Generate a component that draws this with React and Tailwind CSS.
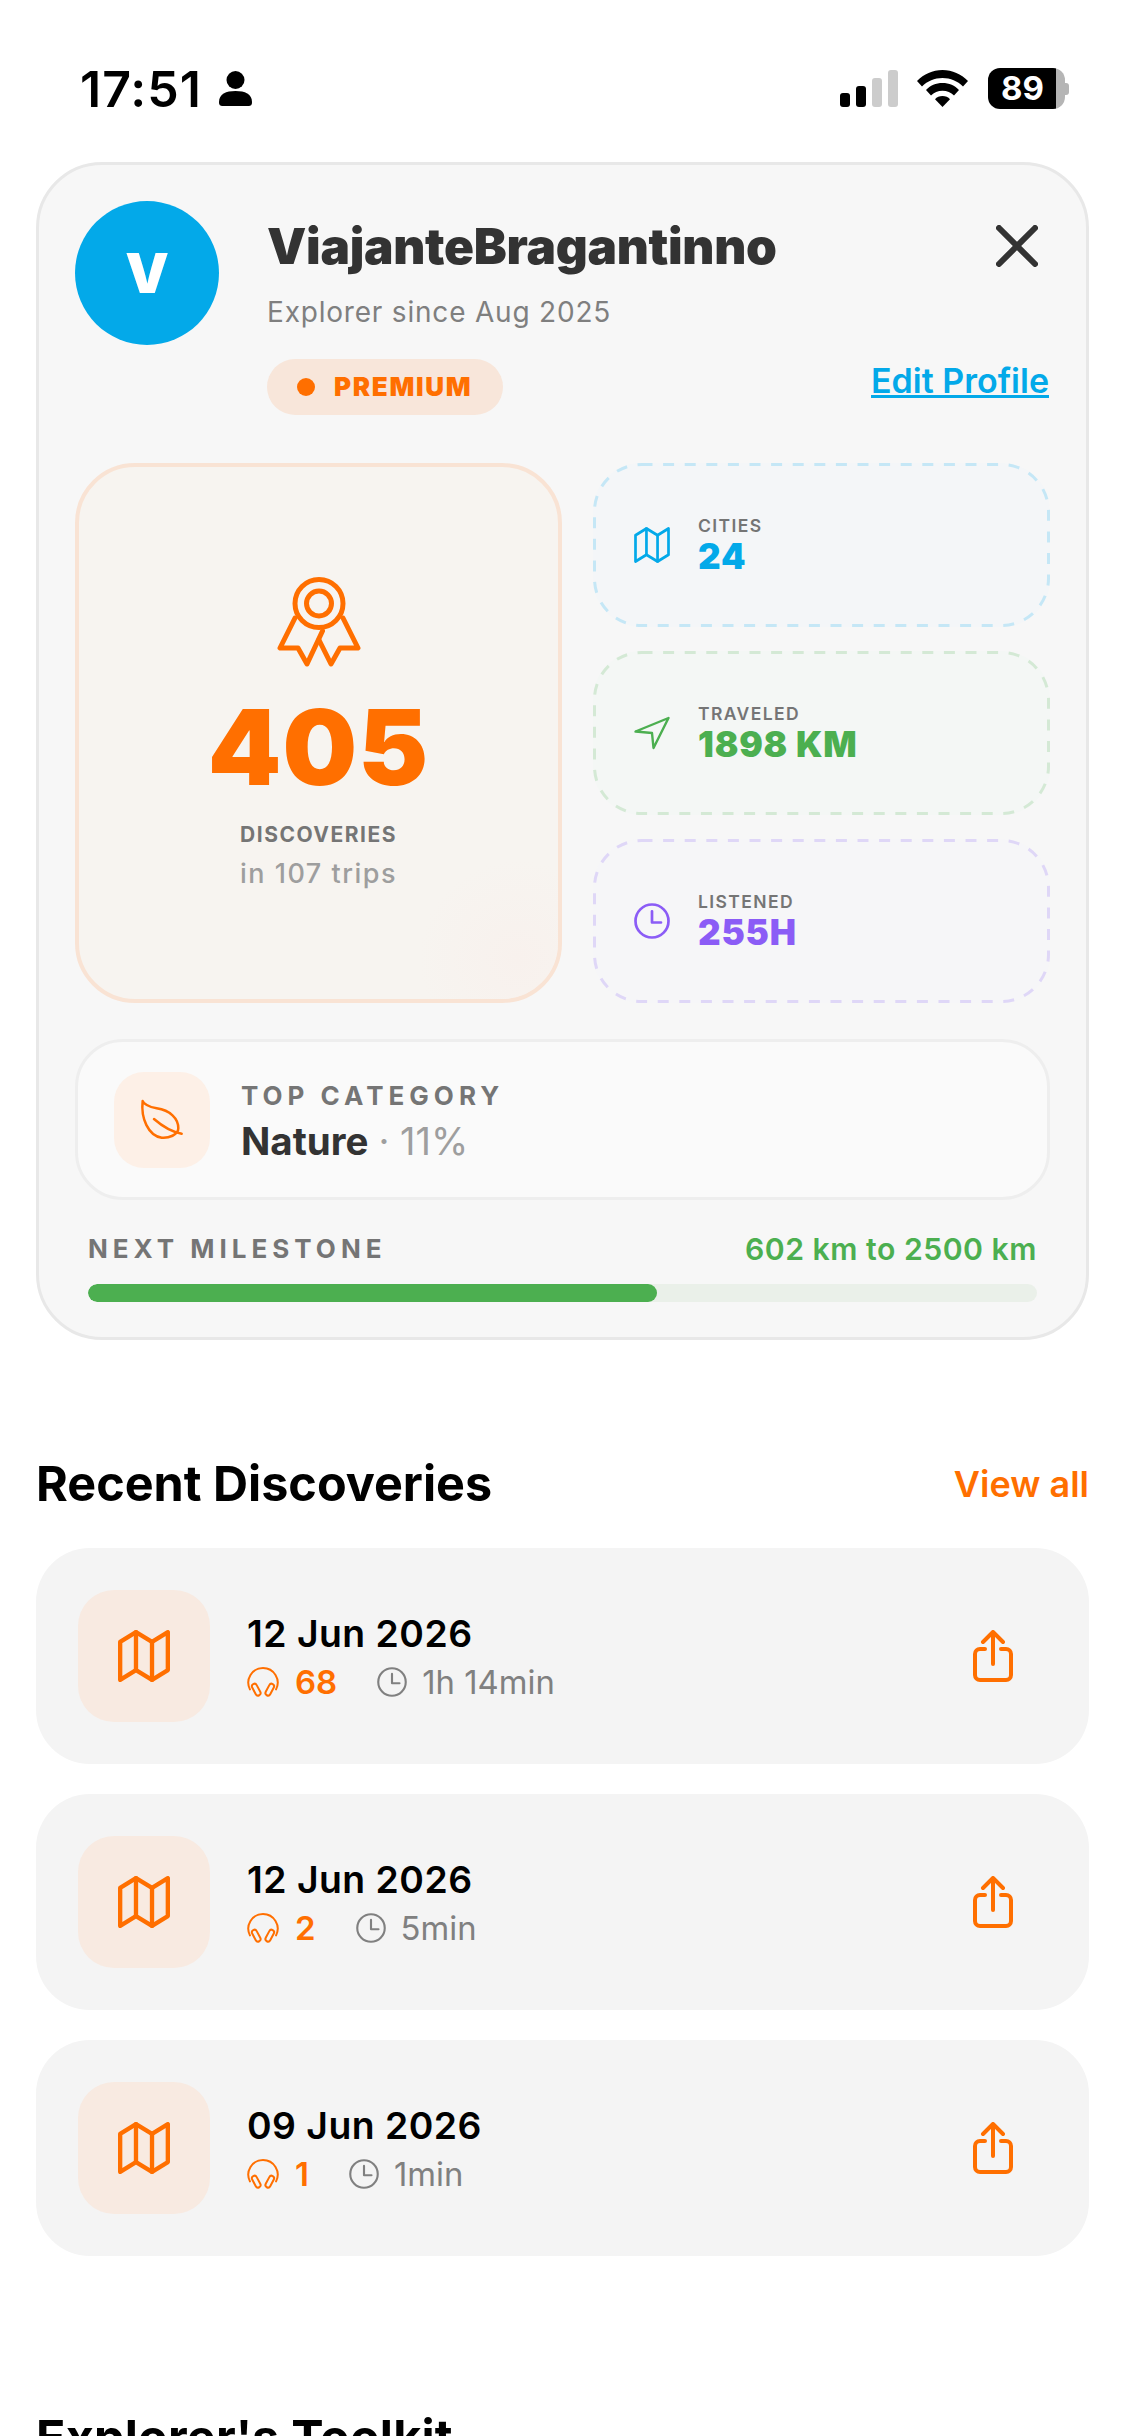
import React from "react";

function MapIcon({ className, strokeWidth = 2 }) {
  return (
    <svg viewBox="0 0 24 24" fill="none" stroke="currentColor" strokeWidth={strokeWidth} strokeLinecap="round" strokeLinejoin="round" className={className}>
      <path d="M1 5.500 8.300 1l7.400 4.500L23 1v17.500L15.700 23l-7.400-4.500L1 23z" />
      <path d="M8.300 1v17.500M15.700 5.500V23" />
    </svg>
  );
}

function NavIcon({ className }) {
  return (
    <svg viewBox="0 0 24 24" fill="none" stroke="currentColor" strokeWidth="1.600" strokeLinecap="round" strokeLinejoin="round" className={className}>
      <path d="M1 11 23 2 13 22l-1-10z" />
    </svg>
  );
}

function ClockIcon({ className, strokeWidth = 1.800 }) {
  return (
    <svg viewBox="0 0 24 24" fill="none" stroke="currentColor" strokeWidth={strokeWidth} strokeLinecap="round" strokeLinejoin="round" className={className}>
      <circle cx="12" cy="12" r="11" />
      <path d="M12 5.500V13h6" />
    </svg>
  );
}

function MedalIcon({ className }) {
  return (
    <svg viewBox="0 0 84 90" fill="none" stroke="currentColor" strokeWidth="5" strokeLinecap="round" strokeLinejoin="round" className={className}>
      <circle cx="42" cy="26.500" r="24" />
      <circle cx="42" cy="26.500" r="12.500" />
      <path d="M18 41 3 71h18l9 16 15.500-33" />
      <path d="M66 41l15 30H63l-9 16-12-24" />
    </svg>
  );
}

function HeadphonesIcon({ className }) {
  return (
    <svg viewBox="0 0 24 24" fill="none" stroke="currentColor" strokeWidth="1.500" strokeLinecap="round" strokeLinejoin="round" className={`overflow-visible ${className}`}>
      <path d="M2.200 17.500A11 11 0 1 1 21.800 17.500" />
      <rect x="5" y="13" width="3.800" height="9.500" rx="1.900" transform="rotate(-28 6.900 17.700)" />
      <rect x="15.200" y="13" width="3.800" height="9.500" rx="1.900" transform="rotate(28 17.100 17.700)" />
    </svg>
  );
}

function LeafIcon({ className }) {
  return (
    <svg viewBox="0 0 240 210" fill="none" stroke="currentColor" strokeWidth="7.500" strokeLinecap="round" strokeLinejoin="round" className={className}>
      <path d="M68 48C70 55 85 66 110 70 150 76 175 100 175 130 175 150 145 160 125 158 85 152 62 100 68 48z" />
      <path d="M102 102C125 122 150 140 185 146" />
    </svg>
  );
}

function ShareIcon({ className }) {
  return (
    <svg viewBox="0 0 40 52" fill="none" stroke="currentColor" strokeWidth="4" strokeLinecap="round" strokeLinejoin="round" className={className}>
      <path d="M20 34V2M10 12 20 2l10 10" />
      <path d="M12 19H7a5 5 0 0 0-5 5v21a5 5 0 0 0 5 5h26a5 5 0 0 0 5-5V24a5 5 0 0 0-5-5h-5" />
    </svg>
  );
}

function StatusBar() {
  return (
    <div className="flex items-center justify-between h-[162px] pl-[80px] pr-[56px] pt-[15px] shrink-0">
      <div className="flex items-center gap-[17px]">
        <span className="text-[50px] leading-none font-semibold text-black tracking-[1px]">17:51</span>
        <svg viewBox="0 0 33 35" fill="black" className="w-[33px] h-[35px]">
          <circle cx="16.500" cy="9" r="9" />
          <path d="M0 31c0-8 7-11 16.500-11S33 23 33 31c0 3-1 4-4 4H4c-3 0-4-1-4-4z" />
        </svg>
      </div>
      <div className="flex items-center">
        <div className="flex items-end gap-[6px] h-[37px]">
          <div className="w-[10px] h-[14px] rounded-[3px] bg-black" />
          <div className="w-[10px] h-[21px] rounded-[3px] bg-black" />
          <div className="w-[10px] h-[29px] rounded-[3px] bg-[#cccccc]" />
          <div className="w-[10px] h-[37px] rounded-[3px] bg-[#cccccc]" />
        </div>
        <svg viewBox="0 0 51 37" className="w-[51px] h-[37px] ml-[19px]" fill="black">
          <path d="M25.500 0C15.500 0 7 4 0 11l5 5.500C10.500 11 17.500 8 25.500 8s15 3 20.500 8.500L51 11C44 4 35.500 0 25.500 0z" />
          <path d="M25.500 13c-6.500 0-12.500 2.500-16.500 7l5 5.500c3-3 7-4.800 11.500-4.800S34 22.500 37 25.500l5-5.500c-4-4.500-10-7-16.500-7z" />
          <path d="M25.500 26c-3 0-5.700 1.200-7.500 3.200l7.500 7.800 7.500-7.800C31.200 27.200 28.500 26 25.500 26z" />
        </svg>
        <div className="flex items-center ml-[20px]">
          <div className="w-[77px] h-[41px] rounded-[12px] bg-[linear-gradient(to_right,#000_88%,#b5b5b5_88%)] flex items-center justify-center pr-[8px]">
            <span className="text-[33px] leading-none font-bold text-white">89</span>
          </div>
          <div className="w-[4px] h-[12px] rounded-r-[3px] bg-[#b5b5b5]" />
        </div>
      </div>
    </div>
  );
}

function StatCard({ icon, label, value, stroke, fill, accent }) {
  return (
    <div className={`relative flex-1 flex items-center rounded-[48px] pl-[41px] ${fill}`}>
      {/* css dashed borders come out too short here, so the dashes are drawn */}
      <svg viewBox="0 0 457 164" fill="none" className={`absolute inset-0 w-full h-full ${stroke}`}>
        <rect x="1.500" y="1.500" width="454" height="161" rx="47" stroke="currentColor" strokeWidth="3" strokeDasharray="11 10.600" />
      </svg>
      <div className={`w-[36px] h-[36px] mr-[28px] ${accent}`}>{icon}</div>
      <div className="flex flex-col">
        <span className="text-[17.500px] leading-[22px] font-semibold tracking-[1.400px] text-[#757575]">{label}</span>
        <span className={`text-[35px] leading-[39px] font-black tracking-[0.800px] ${accent}`}>{value}</span>
      </div>
    </div>
  );
}

function DiscoveryRow({ date, count, time }) {
  return (
    <div className="flex items-center h-[216px] rounded-[54px] bg-[#f4f4f4] pl-[42px] pr-[76px]">
      <div className="w-[132px] h-[132px] rounded-[36px] bg-[#f8eae1] flex items-center justify-center text-[#ff6f00]">
        <MapIcon className="w-[52px] h-[52px]" strokeWidth={2} />
      </div>
      <div className="ml-[37px] pt-[4px] flex-1 flex flex-col">
        <span className="text-[37.300px] leading-[44px] font-semibold text-black tracking-[0.500px]">{date}</span>
        <div className="flex items-center h-[42px] mt-[5px]">
          <HeadphonesIcon className="w-[32px] h-[32px] text-[#ff6f00]" />
          <span className="ml-[16px] mr-[40px] text-[33px] leading-none font-semibold text-[#ff6f00]">{count}</span>
          <ClockIcon className="w-[30px] h-[30px] text-[#808080]" strokeWidth={1.700} />
          <span className="ml-[15px] text-[32.800px] leading-none text-[#808080]">{time}</span>
        </div>
      </div>
      <ShareIcon className="w-[40px] h-[52px] text-[#ff6f00]" />
    </div>
  );
}

export default function App() {
  return (
    <div className="w-[1125px] h-[2436px] overflow-hidden bg-white font-['Inter',sans-serif] flex flex-col">
      <StatusBar />

      <div className="mx-[36px] h-[1178px] shrink-0 rounded-[66px] border-[3px] border-[#e8e8e8] bg-[#f7f7f7] px-[36px] pt-[36px]">
        {/* Header */}
        <div className="flex h-[262px]">
          <div className="w-[144px] h-[144px] rounded-full bg-[#03a9e9] flex items-center justify-center shrink-0">
            <span className="text-[55px] leading-none font-black text-white">V</span>
          </div>
          <div className="ml-[48px] flex-1 flex flex-col">
            <div className="flex items-center justify-between pt-[15px]">
              <span className="text-[49.500px] leading-[60px] font-black text-[#333333] tracking-[-0.300px]">ViajanteBragantinno</span>
              <svg viewBox="0 0 42 42" fill="none" stroke="#333333" strokeWidth="6" strokeLinecap="round" className="w-[42px] h-[42px] mr-[12px]">
                <path d="M3 3l36 36M39 3 3 39" />
              </svg>
            </div>
            <span className="mt-[18px] text-[28px] leading-[36px] text-[#7f7f7f] tracking-[0.800px]">Explorer since Aug 2025</span>
            <div className="mt-[29px] flex items-start justify-between">
              <div className="flex items-center h-[56px] w-[236px] rounded-full bg-[#f8e6da] pl-[30px]">
                <div className="w-[18px] h-[18px] rounded-full bg-[#ff6f00]" />
                <span className="ml-[19px] text-[26px] leading-none font-black tracking-[1.700px] text-[#ff6f00]">PREMIUM</span>
              </div>
              <span className="pt-[2px] text-[34px] leading-[40px] font-semibold text-[#03a9e9] underline mr-[1px]">Edit Profile</span>
            </div>
          </div>
        </div>

        {/* Stats */}
        <div className="flex justify-between h-[540px]">
          <div className="relative overflow-hidden w-[487px] rounded-[60px] border-[4px] border-[#f9e3d4] bg-[#f7f4f0] flex flex-col items-center pt-[110px]">
            <div className="absolute right-[-60px] bottom-[-60px] w-[200px] h-[200px] rounded-full bg-[radial-gradient(circle,#f8f1ed,#f7f4f000_70%)]" />
            <MedalIcon className="w-[84px] h-[90px] text-[#ff6f00]" />
            <span className="mt-[21px] text-[105px] leading-[118px] font-black text-[#ff6f00] tracking-[1px]">405</span>
            <span className="mt-[16px] text-[21px] leading-[26px] font-bold tracking-[1.500px] text-[#757575]">DISCOVERIES</span>
            <span className="mt-[10px] text-[27px] leading-[32px] font-medium tracking-[1.500px] text-[#9e9e9e]">in 107 trips</span>
          </div>
          <div className="w-[457px] flex flex-col gap-[24px]">
            <StatCard icon={<MapIcon className="w-[36px] h-[36px]" strokeWidth={1.800} />} label="CITIES" value="24" stroke="text-[#c5e7f6]" fill="bg-[#f4f6f8]" accent="text-[#03a9e9]" />
            <StatCard icon={<NavIcon className="w-[36px] h-[36px]" />} label="TRAVELED" value="1898 KM" stroke="text-[#d4e9d5]" fill="bg-[#f4f7f5]" accent="text-[#4caf50]" />
            <StatCard icon={<ClockIcon className="w-[36px] h-[36px]" />} label="LISTENED" value="255H" stroke="text-[#dfd7f7]" fill="bg-[#f6f6f8]" accent="text-[#8b5cf6]" />
          </div>
        </div>

        {/* Top category */}
        <div className="mt-[36px] flex items-center h-[161px] rounded-[48px] border-[3px] border-[#eeeeee] bg-[#fafafa] pl-[36px]">
          <div className="w-[96px] h-[96px] rounded-[30px] bg-[#fdf0e7] flex items-center justify-center text-[#ff6f00]">
            <LeafIcon className="w-[80px] h-[70px] mr-[4px]" />
          </div>
          <div className="ml-[31px] pt-[5px] flex flex-col">
            <span className="text-[26px] leading-[30px] font-bold tracking-[5px] text-[#757575]">TOP CATEGORY</span>
            <div className="mt-[7px] flex items-baseline">
              <span className="text-[38.500px] leading-[46px] font-bold text-[#333333]">Nature</span>
              <span className="ml-[10px] text-[38px] leading-[46px] text-[#9e9e9e]">· 11%</span>
            </div>
          </div>
        </div>

        {/* Milestone */}
        <div className="mt-[34px] px-[13px]">
          <div className="flex items-center justify-between h-[30px]">
            <span className="text-[26px] leading-none font-bold tracking-[5px] text-[#757575]">NEXT MILESTONE</span>
            <span className="text-[30.200px] leading-none font-semibold text-[#4caf50] tracking-[0.500px]">602 km to 2500 km</span>
          </div>
          <div className="mt-[20px] h-[18px] rounded-full bg-[#eaf0e9] overflow-hidden">
            <div className="h-full w-[60%] rounded-full bg-[#4caf50]" />
          </div>
        </div>
      </div>

      {/* Recent */}
      <div className="mx-[36px] mt-[120px] flex items-center justify-between h-[60px]">
        <span className="text-[48.500px] leading-none font-bold text-black">Recent Discoveries</span>
        <span className="text-[36px] leading-none font-semibold text-[#ff6f00]">View all</span>
      </div>
      <div className="mx-[36px] mt-[39px] flex flex-col gap-[30px]">
        <DiscoveryRow date="12 Jun 2026" count="68" time="1h 14min" />
        <DiscoveryRow date="12 Jun 2026" count="2" time="5min" />
        <DiscoveryRow date="09 Jun 2026" count="1" time="1min" />
      </div>

      <div className="mx-[36px] mt-[158px]">
        <span className="text-[48.500px] leading-none font-bold text-black tracking-[0.200px]">Explorer's Toolkit</span>
      </div>
    </div>
  );
}
